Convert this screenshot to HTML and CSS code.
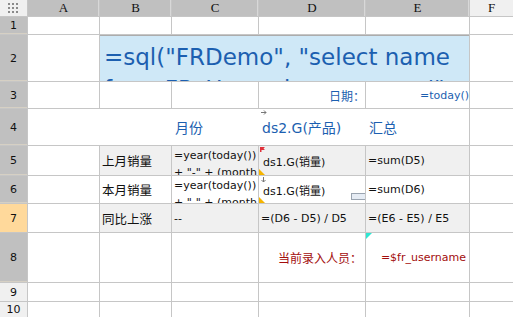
FILE: index.html
```html
<!DOCTYPE html>
<html lang="zh">
<head>
  <meta charset="UTF-8">
  <title>Report Designer</title>
  <link rel="stylesheet" href="styles.css">
</head>
<body>
  <div class="sheet">
    <!-- header row -->
    <div class="corner">
      <svg width="11" height="11" viewBox="0 0 11 11">
        <rect x="0" y="0" width="2" height="2"/><rect x="4" y="0" width="2" height="2"/><rect x="8" y="0" width="2" height="2"/>
        <rect x="0" y="4" width="2" height="2"/><rect x="4" y="4" width="2" height="2"/><rect x="8" y="4" width="2" height="2"/>
        <rect x="0" y="8" width="2" height="2"/><rect x="4" y="8" width="2" height="2"/><rect x="8" y="8" width="2" height="2"/>
      </svg>
    </div>
    <div class="colhead">A</div>
    <div class="colhead">B</div>
    <div class="colhead">C</div>
    <div class="colhead">D</div>
    <div class="colhead">E</div>
    <div class="colhead light">F</div>

    <!-- row 1 -->
    <div class="rowhead">1</div>
    <div class="cell"></div><div class="cell"></div><div class="cell"></div>
    <div class="cell"></div><div class="cell"></div><div class="cell"></div>

    <!-- row 2 -->
    <div class="rowhead">2</div>
    <div class="cell"></div>
    <div class="cell title">=sql("FRDemo", "select name from FR_User where name='" + $fr_username + "'", 1)</div>
    <div class="cell"></div>

    <!-- row 3 -->
    <div class="rowhead">3</div>
    <div class="cell"></div><div class="cell"></div><div class="cell"></div>
    <div class="cell blue right small-cjk">日期：</div>
    <div class="cell blue right formula">=today()</div>
    <div class="cell"></div>

    <!-- row 4 -->
    <div class="rowhead">4</div>
    <div class="cell heads">
      <div></div>
      <div></div>
      <div class="head-text">月份</div>
      <div class="head-text mark-cell">
        <svg class="mark arrow-r" width="6" height="5" viewBox="0 0 6 5"><path d="M0 2.5H5M3 0.5L5 2.5L3 4.5" stroke="#777" fill="none"/></svg>
        ds2.G(产品)
      </div>
      <div class="head-text">汇总</div>
    </div>
    <div class="cell"></div>

    <!-- row 5 -->
    <div class="rowhead">5</div>
    <div class="cell"></div>
    <div class="cell grey label">上月销量</div>
    <div class="cell grey formula wrap">=year(today()) + "-" + (month(today()) - 1)</div>
    <div class="cell grey formula ds mark-cell">
      <svg class="mark flag" width="5" height="5" viewBox="0 0 5 5"><path d="M0 0H5L3.5 1.5L5 3H1.5V5H0Z" fill="#e0303a"/></svg>
      ds1.G(销量)
      <span class="tri-yellow"></span>
    </div>
    <div class="cell grey formula">=sum(D5)</div>
    <div class="cell"></div>

    <!-- row 6 -->
    <div class="rowhead">6</div>
    <div class="cell"></div>
    <div class="cell label">本月销量</div>
    <div class="cell formula wrap">=year(today()) + "-" + (month(today()))</div>
    <div class="cell formula ds mark-cell">
      <svg class="mark arrow-d" width="5" height="6" viewBox="0 0 5 6"><path d="M2.5 0V5M0.5 3L2.5 5L4.5 3" stroke="#777" fill="none"/></svg>
      ds1.G(销量)
      <span class="tri-yellow"></span>
      <span class="handle"></span>
    </div>
    <div class="cell formula">=sum(D6)</div>
    <div class="cell"></div>

    <!-- row 7 -->
    <div class="rowhead active">7</div>
    <div class="cell"></div>
    <div class="cell grey label">同比上涨</div>
    <div class="cell grey formula">--</div>
    <div class="cell grey formula">=(D6 - D5) / D5</div>
    <div class="cell grey formula">=(E6 - E5) / E5</div>
    <div class="cell"></div>

    <!-- row 8 -->
    <div class="rowhead">8</div>
    <div class="cell"></div><div class="cell"></div><div class="cell"></div>
    <div class="cell red right small-cjk pad">当前录入人员：</div>
    <div class="cell red right formula pad mark-cell">
      <span class="tri-cyan"></span>
      =$fr_username
    </div>
    <div class="cell"></div>

    <!-- rows 9, 10 -->
    <div class="rowhead light">9</div>
    <div class="cell"></div><div class="cell"></div><div class="cell"></div>
    <div class="cell"></div><div class="cell"></div><div class="cell"></div>

    <div class="rowhead light">10</div>
    <div class="cell"></div><div class="cell"></div><div class="cell"></div>
    <div class="cell"></div><div class="cell"></div><div class="cell"></div>
  </div>
</body>
</html>
```

FILE: styles.css
```css
body {
  margin: 0;
  overflow: hidden;
  background: #c6c6c6;
  font-family: "DejaVu Sans", "Noto Sans CJK SC", sans-serif;
}

.sheet {
  display: grid;
  grid-template-columns: 27px 71px 71px 86px 106px 103px 1fr;
  grid-template-rows: 16px 17px 46px 26px 36px 29px 27px 28px 49px 18px 15px;
  gap: 1px;
  background: #c6c6c6;
  width: 513px;
  height: 317px;
}

.corner {
  background: #f0f0f0;
  display: flex;
  justify-content: center;
  align-items: center;
}
.corner svg {
  fill: #8a8a8a;
}

.colhead {
  background: #c0c0c0;
  color: #111;
  font-family: "Liberation Serif", serif;
  font-size: 13px;
  display: flex;
  justify-content: center;
  align-items: center;
  box-shadow: inset -1px 0 0 #d8d8d8;
}

.rowhead {
  background: #c0c0c0;
  color: #111;
  font-size: 11px;
  display: flex;
  justify-content: center;
  align-items: center;
  box-shadow: inset 0 -1px 0 #d6d0c4;
}

.colhead.light,
.rowhead.light {
  background: #f0f0f0;
  box-shadow: none;
}

.rowhead.active {
  background: #ffd99b;
  box-shadow: none;
}

.cell {
  background: #fff;
  overflow: hidden;
  white-space: nowrap;
  display: flex;
  align-items: center;
  font-size: 11px;
  color: #111;
}

.grey {
  background: #f0f0f0;
}

.title {
  grid-column: span 4;
  background: #cfe8f7;
  box-shadow: inset 0 1px 0 #acacac;
  color: #1c5fb0;
  font-size: 23px;
  line-height: 32px;
  white-space: normal;
  display: block;
  padding: 6px 0 0 4px;
}

.blue {
  color: #1c5fb0;
}

.red {
  color: #a30d0d;
}

.right {
  justify-content: flex-end;
}

.pad {
  padding-right: 3px;
}

.small-cjk {
  font-size: 12px;
  font-family: "Noto Sans CJK SC", sans-serif;
}

.label {
  font-family: "Noto Sans CJK SC", sans-serif;
  font-size: 12.5px;
  padding-left: 2px;
}

.formula {
  padding-left: 2px;
}

.ds {
  padding-left: 4px;
}

.wrap {
  white-space: normal;
  align-items: flex-start;
  line-height: 17px;
  padding-top: 1px;
  word-break: break-all;
}

.heads {
  grid-column: span 5;
  display: grid;
  grid-template-columns: 72px 72px 87px 107px 104px;
  align-items: center;
  overflow: visible;
}

.head-text {
  color: #1c5fb0;
  font-size: 14px;
  padding-left: 3px;
  height: 100%;
  display: flex;
  align-items: center;
}

.mark-cell {
  position: relative;
  overflow: visible;
}

.mark {
  position: absolute;
  left: 2px;
  top: 1px;
}

.flag {
  left: 1px;
  top: 1px;
}

.tri-yellow {
  position: absolute;
  left: 0;
  bottom: 0;
  width: 0;
  height: 0;
  border-left: 6px solid #f5b400;
  border-top: 6px solid transparent;
}

.tri-cyan {
  position: absolute;
  left: 0;
  top: 0;
  width: 0;
  height: 0;
  border-left: 6px solid #2fe6d2;
  border-bottom: 6px solid transparent;
}

.handle {
  position: absolute;
  right: 0;
  bottom: 3px;
  width: 13px;
  height: 5px;
  background: #e6ecf4;
  border: 1px solid #9aa4b0;
  border-right: none;
}
```
